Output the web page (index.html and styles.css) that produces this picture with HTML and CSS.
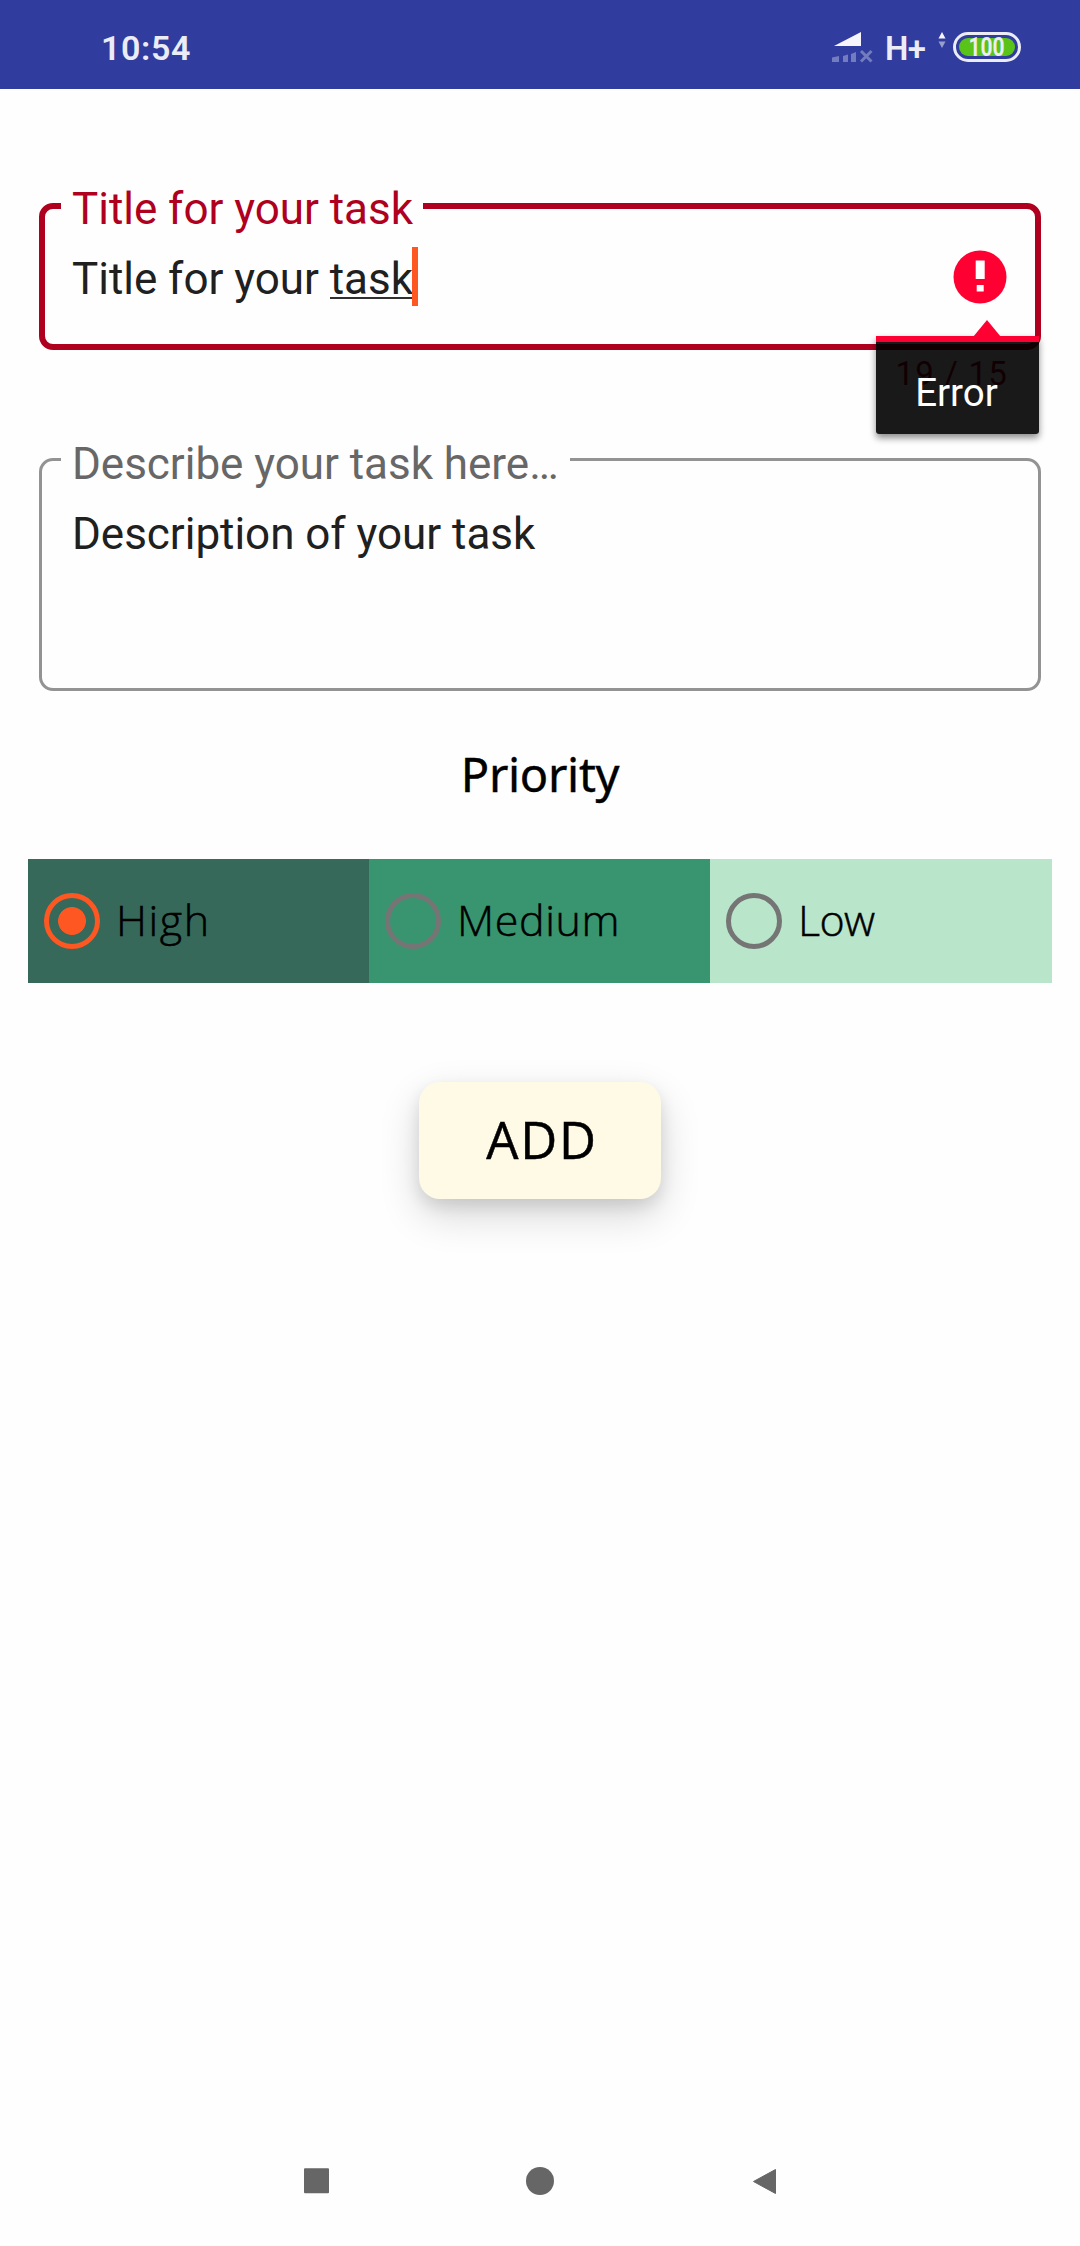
FILE: index.html
```html
<!DOCTYPE html>
<html lang="en">
<head>
<meta charset="utf-8">
<title>Add task</title>
<link rel="stylesheet" href="styles.css">
</head>
<body>
<div class="screen">
  <header class="status">
    <span class="clock">10:54</span>
    <svg class="signal" width="42" height="32" viewBox="0 0 42 32">
      <path fill="#f5f5fb" d="M3 15 30 1v14z"/>
      <path fill="#737cbf" d="M1 26.5 8 25v6H1zM12 25l5-1.500V31h-5zM20 23l5-2v10h-5z"/>
      <path stroke="#737cbf" stroke-width="3" d="m30 20 10.500 10.500M40.500 20 30 30.500"/>
    </svg>
    <span class="network">H+</span>
    <svg class="traffic" width="8" height="16" viewBox="0 0 8 16">
      <path fill="#f5f5fb" d="M0.500 6.500 4 0l3.500 6.500z"/>
      <path fill="#979fce" d="M0.500 9.500 4 16l3.500-6.500z"/>
    </svg>
    <span class="battery"><span class="charge"><span class="percent">100</span></span></span>
  </header>

  <main class="form">
    <div class="field field-error">
      <label class="label">Title for your task</label>
      <div class="value">Title for your <span class="composing">task</span><i class="caret"></i></div>
      <svg class="alert" width="54" height="54" viewBox="0 0 54 54">
        <circle cx="27" cy="27" r="26.500" fill="#ff0033"/>
        <path fill="#fff" d="M22.700 10.500h9V29h-9zM23.700 35h7v6.500h-7z"/>
      </svg>
      <span class="counter">19 / 15</span>
      <div class="popup">
        <svg class="arrow" width="28" height="17" viewBox="0 0 28 17"><path fill="#ff0033" d="M14 0 28 17H0z"/></svg>
        <span class="message">Error</span>
      </div>
    </div>

    <div class="field field-desc">
      <label class="label">Describe your task here…</label>
      <div class="value">Description of your task</div>
    </div>

    <h2 class="heading">Priority</h2>

    <div class="options">
      <label class="option high"><i class="radio checked"></i><span class="name">High</span></label>
      <label class="option medium"><i class="radio"></i><span class="name">Medium</span></label>
      <label class="option low"><i class="radio"></i><span class="name">Low</span></label>
    </div>

    <button class="add">ADD</button>
  </main>

  <nav class="nav">
    <svg width="28" height="28" viewBox="0 0 28 28"><rect x="2" y="1.200" width="25" height="25" rx="1" fill="#666"/></svg>
    <svg width="28" height="28" viewBox="0 0 28 28"><circle cx="14" cy="14" r="14" fill="#666"/></svg>
    <svg width="28" height="28" viewBox="0 0 28 28"><path fill="#666" stroke="#666" stroke-linejoin="round" d="M3.500 14.500 25.500 2.500v24z"/></svg>
  </nav>
</div>
</body>
</html>
```
FILE: styles.css
```css
* { box-sizing: border-box; }
body { margin: 0; background: #fefefe; font-family: Roboto, sans-serif; }
.screen { width: 1080px; height: 2246px; display: flex; flex-direction: column; }

.status {
  height: 89px;
  padding: 4px 59px 0 101px;
  background: #303d9e;
  color: #ebecf5;
  display: flex;
  align-items: center;
}
.clock { font-size: 34px; font-weight: 600; letter-spacing: 0.6px; margin-right: auto; padding-top: 3px; }
.signal { margin-right: 12px; }
.network { font-size: 33px; font-weight: 600; letter-spacing: -0.5px; width: 42px; margin-right: 11px; padding-top: 3px; }
.traffic { margin-right: 7px; margin-bottom: 13px; }
.battery {
  width: 68px;
  height: 30px;
  padding: 3px;
  border: 3px solid #ebecf5;
  border-radius: 15px;
}
.charge {
  display: block;
  height: 18px;
  border-radius: 9px;
  background: #5ac31a;
  font-size: 25px;
  font-weight: 700;
  line-height: 19px;
  text-align: center;
}
.percent { display: inline-block; transform: scaleX(0.84); }

.form { flex: 1; display: flex; flex-direction: column; padding: 114px 28px 0; }
.field {
  position: relative;
  margin: 0 11px;
  border-radius: 14px;
  font-size: 44px;
  line-height: 52px;
  letter-spacing: -0.030px;
  color: #202020;
}
.field-error { height: 147px; border: 6px solid #b00020; padding: 44px 27px 0; }
.field-desc { height: 233px; margin-top: 108px; border: 3px solid #939393; padding: 47px 30px 0; }
.label {
  position: absolute;
  padding: 0 11px;
  background: #fefefe;
  white-space: nowrap;
}
.field-error .label { left: 16px; top: -26px; padding-right: 10px; color: #b00020; }
.field-desc .label { left: 19px; top: -23px; color: #676767; }
.value { display: flex; white-space: pre; }
.composing { height: 46px; border-bottom: 2px solid #303030; }
.caret { width: 6px; height: 59px; margin: -6px 0 0 -1px; background: #ff5722; }
.alert { position: absolute; right: 28px; top: 41px; }
.counter {
  position: absolute;
  right: 27px;
  top: 145px;
  font-size: 33px;
  line-height: 40px;
  letter-spacing: 1.200px;
  color: #b00020;
}
.popup {
  position: absolute;
  right: -4px;
  top: 127px;
  width: 163px;
  height: 98px;
  border-top: 6px solid #ff0033;
  border-radius: 0 0 3px 3px;
  background: rgba(0, 0, 0, 0.9);
  background-clip: padding-box;
  box-shadow: 0 4px 7px rgba(0, 0, 0, 0.45);
}
.arrow { position: absolute; right: 38px; top: -22px; }
.message { display: block; padding: 25px 2px 0 0; text-align: center; color: #fff; font-size: 38.500px; line-height: 52px; letter-spacing: 0; }

.heading {
  margin: 48px 0 0;
  height: 70px;
  font: 400 47px/70px "Noto Sans", sans-serif;
  letter-spacing: -0.300px;
  -webkit-text-stroke: 0.400px #000;
  text-align: center;
  color: #000;
}
.options { display: grid; grid-template-columns: 341px 341px 342px; height: 124px; margin-top: 50px; }
.option {
  display: flex;
  align-items: center;
  padding-left: 16px;
  gap: 16px;
  font: 300 43px/60px "Open Sans", sans-serif;
  color: #000;
}
.name { padding-bottom: 2px; -webkit-text-stroke: 0.500px #000; }
.high .name { letter-spacing: 1.600px; }
.medium .name { letter-spacing: 0.600px; }
.low .name { letter-spacing: -0.600px; }
.high { background: #366959; }
.medium { background: #399570; }
.low { background: #b9e5ca; }
.radio { width: 56px; height: 56px; border: 5.500px solid #757575; border-radius: 50%; }
.checked { border-color: #ff5722; background: radial-gradient(circle, #ff5722 13.500px, transparent 14.300px); }

.add {
  align-self: center;
  width: 242px;
  height: 117px;
  margin-top: 99px;
  padding: 0 0 3px 4px;
  border: 0;
  border-radius: 21px;
  background: #fffae6;
  color: #000;
  font: 400 51px/114px "Open Sans", sans-serif;
  letter-spacing: 1.800px;
  -webkit-text-stroke: 0.500px #000;
  box-shadow: 0 16px 40px rgba(0, 0, 0, 0.16), 0 7px 16px rgba(0, 0, 0, 0.1);
}

.nav { height: 130px; padding: 51px 302px 0; display: flex; justify-content: space-between; }
```
